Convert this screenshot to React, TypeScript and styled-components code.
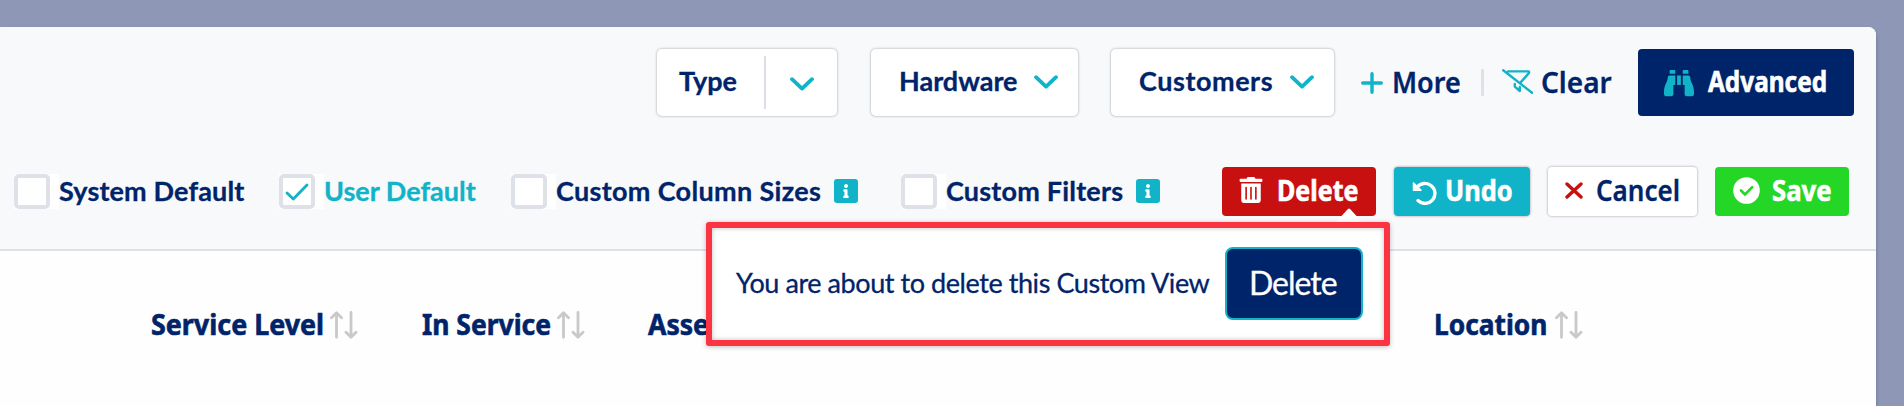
import React from 'react';
import styled, { createGlobalStyle } from 'styled-components';
import { FaBinoculars, FaInfo, FaTrashAlt } from 'react-icons/fa';

const navy = '#00246a';
const teal = '#10b3c7';
const line = '#dee1e8';

const GlobalStyle = createGlobalStyle`
  * { box-sizing: border-box; }
  body { margin: 0; background: #8e98b6; overflow: hidden; }
  svg { display: block; flex: none; }
`;

const Page = styled.div`
  height: 406px;
  padding-top: 27px;
  overflow: hidden;
`;
const Panel = styled.main`
  width: 1876px;
  height: 379px;
  background: #fefefe;
  border-top-right-radius: 8px;
  box-shadow: 0 3px 4px rgba(20, 35, 90, 0.3);
`;
const Controls = styled.header`
  height: 224px;
  background: #f8f9fb;
  border-bottom: 2px solid ${line};
  border-top-right-radius: 8px;
`;
const Filters = styled.div`
  display: flex;
  align-items: center;
  padding: 22px 0 0 657px;
`;
const Options = styled.div`
  display: flex;
  align-items: center;
  height: 49px;
  margin-top: 51px;
  padding-left: 14px;
`;

type LabelProps = {
  $w: number;
  $ls?: number;
  $color?: string;
  $size?: number;
  $weight?: number;
  $lift?: number;
  $narrow?: number;
};
const Round = styled.span<LabelProps>`
  flex: none;
  display: block;
  width: ${p => p.$w}px;
  padding-bottom: ${p => p.$lift ?? 2}px;
  white-space: nowrap;
  font: ${p => p.$weight ?? 700} ${p => p.$size ?? 27}px/34px Lato, sans-serif;
  letter-spacing: ${p => p.$ls ?? 0}px;
  color: ${p => p.$color ?? navy};
  -webkit-text-stroke: 0.3px currentColor;
`;
const Strong = styled(Round)`
  font-family: 'Noto Sans', sans-serif;
  font-size: ${p => p.$size ?? 28}px;
  -webkit-text-stroke: ${p => (p.$weight === 600 ? 0.3 : 0.6)}px currentColor;
  transform: scaleX(${p => p.$narrow ?? 1});
  transform-origin: left center;
`;
const Select = styled.button<{ $w: number; $pad: number; $gap: number }>`
  display: flex;
  align-items: center;
  flex: none;
  width: ${p => p.$w}px;
  height: 67px;
  margin-right: ${p => p.$gap}px;
  padding: 0 0 2px ${p => p.$pad}px;
  border: 0;
  border-radius: 5px;
  background: #fff;
  text-align: left;
  box-shadow: 0 0 2px 1px rgba(0, 0, 0, 0.17);
`;
const Split = styled.i`
  width: 2px;
  height: 53px;
  margin: 1px 24px 0 27px;
  background: #dbdfe5;
`;
const Divider = styled.i`
  width: 3px;
  height: 27px;
  margin: 0 18px 0 21px;
  border-radius: 1px;
  background: ${line};
`;
const LinkButton = styled.button`
  display: flex;
  align-items: center;
  padding: 0;
  border: 0;
  background: none;
  text-align: left;
`;
const Advanced = styled.button`
  display: flex;
  align-items: center;
  width: 216px;
  height: 67px;
  margin-left: 27px;
  padding: 0 0 0 26px;
  border: 0;
  border-radius: 4px;
  background: ${navy};
  text-align: left;
`;
const Option = styled.label<{ $w: number }>`
  display: flex;
  align-items: center;
  flex: none;
  width: ${p => p.$w}px;
`;
const CheckSlot = styled.span`
  width: 45px;
  height: 35px;
  background: #fff;
`;
const CheckBox = styled.span`
  display: grid;
  place-items: center;
  width: 36px;
  height: 35px;
  border: 4px solid ${line};
  border-radius: 5px;
  background: #fff;
`;
const InfoBadge = styled.span`
  display: grid;
  place-items: center;
  width: 24px;
  height: 24px;
  margin: -2px 0 0 13px;
  border-radius: 3px;
  background: ${teal};
  color: #fff;
`;
const Action = styled.button<{ $w: number; $bg: string; $pad: number; $raised?: boolean; $gap?: number }>`
  position: relative;
  display: flex;
  align-items: center;
  flex: none;
  width: ${p => p.$w}px;
  height: 49px;
  margin-right: ${p => p.$gap ?? 18}px;
  padding: 0 0 0 ${p => p.$pad}px;
  border: 0;
  border-radius: 4px;
  background: ${p => p.$bg};
  text-align: left;
  box-shadow: ${p => (p.$raised ? '0 0 2px 1px rgba(0,0,0,.18)' : 'none')};
`;
const IconSlot = styled.span<{ $w: number; $up?: number; $down?: number }>`
  flex: none;
  width: ${p => p.$w}px;
  padding-top: ${p => p.$down ?? 0}px;
  padding-bottom: ${p => p.$up ?? 0}px;
`;
const Popover = styled.div`
  position: absolute;
  z-index: 2;
  top: 55px;
  right: -14px;
  display: flex;
  align-items: center;
  width: 684px;
  height: 124px;
  padding-left: 24px;
  border: 6px solid #fc3340;
  border-radius: 3px;
  background: #fff;
  box-shadow: 0 1px 5px rgba(0, 0, 0, 0.25), inset 0 0 5px rgba(0, 0, 0, 0.25);
`;
const Arrow = styled.svg`
  position: absolute;
  top: 41px;
  left: 112px;
`;
const Confirm = styled.button`
  width: 138px;
  height: 73px;
  margin-bottom: 1px;
  padding: 0 0 0 22px;
  border: 2px solid ${teal};
  border-radius: 8px;
  background: ${navy};
  text-align: left;
`;
const Columns = styled.div`
  display: flex;
  align-items: center;
  padding: 56px 0 0 151px;
`;
const Column = styled.div<{ $w: number }>`
  display: flex;
  align-items: center;
  flex: none;
  width: ${p => p.$w}px;
`;

const Chevron = () => (
  <svg width="24" height="14" viewBox="0 0 24 14" fill="none" stroke={teal} strokeWidth="3.8" strokeLinecap="round" strokeLinejoin="round">
    <path d="M2 2.2 12 11.6 22 2.2" />
  </svg>
);
const Sort = () => (
  <svg width="28" height="28" viewBox="0 0 28 28" fill="none" stroke="#c9c9c9" strokeWidth="2.8" strokeLinecap="round" strokeLinejoin="round">
    <path d="M6.5 26.3V2M1.5 6.7 6.5 1.8l5 4.9M21 1.5V26M16 21.3l5 4.9 5-4.9" />
  </svg>
);
const Tick = () => (
  <svg width="24" height="18" viewBox="0 0 24 18" fill="none" stroke={teal} strokeWidth="2.8" strokeLinecap="round" strokeLinejoin="round">
    <path d="M2 10 8.3 16 22 2" />
  </svg>
);

const Check = ({ w, label, labelW, ls, checked, info }: {
  w: number; label: string; labelW: number; ls: number; checked?: boolean; info?: boolean;
}) => (
  <Option $w={w}>
    <CheckSlot><CheckBox>{checked && <Tick />}</CheckBox></CheckSlot>
    <Round $w={labelW} $ls={ls} $color={checked ? teal : navy}>{label}</Round>
    {info && <InfoBadge><FaInfo size={14} /></InfoBadge>}
  </Option>
);

export default function App() {
  return (
    <>
      <GlobalStyle />
      <Page>
        <Panel>
          <Controls>
            <Filters>
              <Select $w={180} $pad={22} $gap={34}>
                <Round $w={58}>Type</Round><Split /><IconSlot $w={24} $down={5}><Chevron /></IconSlot>
              </Select>
              <Select $w={207} $pad={28} $gap={33}>
                <Round $w={135}>Hardware</Round><IconSlot $w={24}><Chevron /></IconSlot>
              </Select>
              <Select $w={223} $pad={28} $gap={27}>
                <Round $w={151} $ls={0.55}>Customers</Round><IconSlot $w={24}><Chevron /></IconSlot>
              </Select>
              <LinkButton>
                <IconSlot $w={31}>
                  <svg width="22" height="22" viewBox="0 0 22 22" stroke={teal} strokeWidth="3.4" strokeLinecap="round"><path d="M1.7 11h18.6M11 1.7v18.6" /></svg>
                </IconSlot>
                <Strong $w={68} $weight={600} $narrow={0.965} $lift={1}>More</Strong>
              </LinkButton>
              <Divider />
              <LinkButton>
                <IconSlot $w={39} $up={2}>
                  <svg width="31" height="25" viewBox="0 0 31 25" fill="none" stroke={teal} strokeWidth="2.4" strokeLinecap="round" strokeLinejoin="round">
                    <path d="M1.2 1.2 30 23.8M6 2.4H26.5Q27.6 2.6 26.8 4.2L18.5 13.5M12.8 15v2.6l5 4.4v-4" />
                  </svg>
                </IconSlot>
                <Strong $w={70} $weight={600} $lift={1}>Clear</Strong>
              </LinkButton>
              <Advanced>
                <IconSlot $w={44}><FaBinoculars size={30} color={teal} /></IconSlot>
                <Strong $w={118} $color="#fff" $narrow={0.87} $lift={4}>Advanced</Strong>
              </Advanced>
            </Filters>
            <Options>
              <Check w={265} label="System Default" labelW={186} ls={0.15} />
              <Check w={232} label="User Default" labelW={150} ls={0} checked />
              <Check w={390} label="Custom Column Sizes" labelW={265} ls={0.33} info />
              <Check w={321} label="Custom Filters" labelW={177} ls={0.2} info />
              <Action $w={154} $bg="#c81010" $pad={16}>
                <IconSlot $w={39} $up={4}><FaTrashAlt size={26} color="#fff" /></IconSlot>
                <Strong $w={82} $color="#fff" $narrow={0.895} $lift={3}>Delete</Strong>
                <Arrow width="30" height="14" viewBox="0 0 30 14"><path d="M2 14 13 2Q15-1 17 2L28 14Z" fill="#fff" /></Arrow>
                <Popover>
                  <Round $w={489} $weight={400} $ls={-0.43} $lift={3}>You are about to delete this Custom View</Round>
                  <Confirm><Round $w={87} $size={32} $weight={400} $ls={-1} $color="#fff" $lift={2}>Delete</Round></Confirm>
                </Popover>
              </Action>
              <Action $w={136} $bg={teal} $pad={18} $raised>
                <IconSlot $w={33} $down={2}>
                  <svg width="25" height="24" viewBox="0 0 25 24" fill="none" stroke="#fff" strokeWidth="3.4" strokeLinecap="round" strokeLinejoin="round">
                    <path d="M5 6.3A10 10 0 1 1 6 19.6" /><path d="M1.5 2V9.3H9Z" fill="#fff" strokeWidth="1.5" />
                  </svg>
                </IconSlot>
                <Strong $w={68} $color="#fff" $narrow={0.905} $lift={3}>Undo</Strong>
              </Action>
              <Action $w={149} $bg="#fff" $pad={17} $raised>
                <IconSlot $w={31} $up={3}>
                  <svg width="18" height="17" viewBox="0 0 18 17" stroke="#c81010" strokeWidth="3.4" strokeLinecap="round"><path d="m2 2 14 13M16 2 2 15" /></svg>
                </IconSlot>
                <Strong $w={84} $weight={600} $narrow={0.93} $lift={3}>Cancel</Strong>
              </Action>
              <Action $w={134} $bg="#24d626" $pad={18} $gap={0}>
                <IconSlot $w={39} $up={3}>
                  <svg width="27" height="27" viewBox="0 0 27 27" fill="none"><circle cx="13.5" cy="13.5" r="13.3" fill="#fff" /><path d="m8 13.5 4 4 7.2-7.3" stroke="#24d626" strokeWidth="2.6" strokeLinecap="round" strokeLinejoin="round" /></svg>
                </IconSlot>
                <Strong $w={60} $color="#fff" $narrow={0.92} $lift={3}>Save</Strong>
              </Action>
            </Options>
          </Controls>
          <Columns>
            <Column $w={271}><Strong $w={179} $narrow={0.96}>Service Level</Strong><Sort /></Column>
            <Column $w={226}><Strong $w={135} $narrow={0.945}>In Service</Strong><Sort /></Column>
            <Column $w={786}><Strong $w={136} $narrow={0.95}>Asset</Strong></Column>
            <Column $w={200}><Strong $w={121} $narrow={0.94}>Location</Strong><Sort /></Column>
          </Columns>
        </Panel>
      </Page>
    </>
  );
}
